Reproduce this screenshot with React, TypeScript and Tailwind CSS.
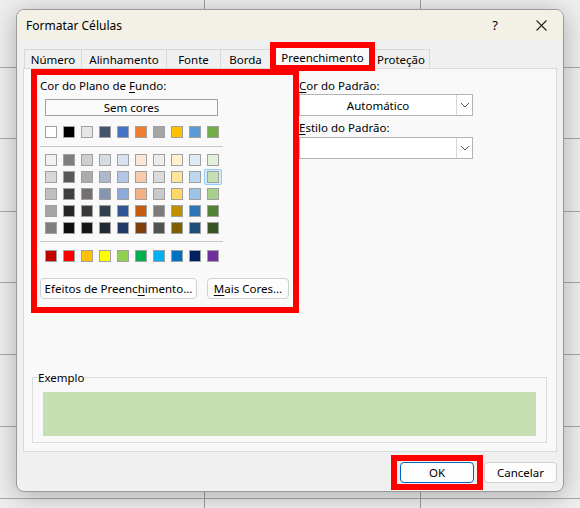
import React from 'react';

const themeRow = ['#FFFFFF', '#000000', '#E7E6E6', '#44546A', '#4472C4', '#ED7D31', '#A5A5A5', '#FFC000', '#5B9BD5', '#70AD47'];

const tintRows = [
  ['#F2F2F2', '#7F7F7F', '#D0CECE', '#D6DCE4', '#D9E2F3', '#FBE5D5', '#EDEDED', '#FFF2CC', '#DEEBF6', '#E2EFD9'],
  ['#D8D8D8', '#595959', '#AEABAB', '#ADB9CA', '#B4C6E7', '#F7CBAC', '#DBDBDB', '#FEE599', '#BDD7EE', '#C5E0B3'],
  ['#BFBFBF', '#3F3F3F', '#757070', '#8496B0', '#8EAADB', '#F4B183', '#C9C9C9', '#FFD965', '#9CC3E5', '#A8D08D'],
  ['#A5A5A5', '#262626', '#3A3838', '#323F4F', '#2F5496', '#C55A11', '#7B7B7B', '#BF9000', '#2E75B5', '#538135'],
  ['#7F7F7F', '#0C0C0C', '#171616', '#222A35', '#1F3864', '#833C0B', '#525252', '#7F6000', '#1E4E79', '#375623'],
];

const standardRow = ['#C00000', '#FF0000', '#FFC000', '#FFFF00', '#92D050', '#00B050', '#00B0F0', '#0070C0', '#002060', '#7030A0'];

// Selected swatch: second tint row, last column
const SELECTED = { row: 1, col: 9 };

const Swatch: React.FC<{ color: string; selected?: boolean }> = ({ color, selected }) => (
  <div className="relative w-[12px] h-[12px]">
    {selected && (
      <div className="absolute -left-[3px] -right-[3px] -top-[2px] -bottom-[2px] rounded-[2px] border border-[#8fcbf7] bg-[#d6ecfc]" />
    )}
    <div className="relative w-[12px] h-[12px] border border-[#a0a0a0]" style={{ backgroundColor: color }} />
  </div>
);

const SwatchRow: React.FC<{ colors: string[]; selectedCol?: number }> = ({ colors, selectedCol }) => (
  <div className="flex gap-[6px]">
    {colors.map((c, i) => (
      <Swatch key={i} color={c} selected={i === selectedCol} />
    ))}
  </div>
);

const Chevron = () => (
  <svg width="10" height="6" viewBox="0 0 10 6" fill="none">
    <path d="M1 1l4 4 4-4" stroke="#555" strokeWidth="1" />
  </svg>
);

const Dropdown: React.FC<{ value?: string }> = ({ value }) => (
  <div className="flex h-[22px] w-[174px] border border-[#b4b4b4] bg-white">
    <div className="flex-1 flex items-center justify-center">{value}</div>
    <div className="w-[16px] flex items-center justify-center border-l border-[#d6d6d6]">
      <Chevron />
    </div>
  </div>
);

const tabs = [
  { label: 'Número', w: 'w-[57px]' },
  { label: 'Alinhamento', w: 'w-[85px]' },
  { label: 'Fonte', w: 'w-[54px]' },
  { label: 'Borda', w: 'w-[50px]' },
];

export default function App() {
  return (
    <div className="relative w-[580px] h-[508px] overflow-hidden bg-[#eeeeee] text-[11.5px] leading-[15px] text-black font-['Segoe_UI','Noto_Sans',sans-serif]">
      {/* spreadsheet grid behind the dialog */}
      <div className="absolute left-[204px] top-0 h-full w-px bg-[#9c9c9c]" />
      <div className="absolute left-[420px] top-0 h-full w-px bg-[#9c9c9c]" />
      {[67, 138, 211, 282, 354, 426, 498].map((y) => (
        <div key={y} className="absolute left-0 w-full h-px bg-[#a8a8a8]" style={{ top: y }} />
      ))}

      <div className="relative pt-[9px] pl-[16px]">
        <div className="w-[548px] h-[483px] flex flex-col rounded-[8px] border border-[#9a9a9a] bg-[#f0f0f0] overflow-hidden shadow-[0_4px_24px_rgba(0,0,0,0.28)]">
          {/* title bar */}
          <div className="h-[30px] flex items-center bg-[#f3f1e6] pl-[9px] pr-[16px]">
            <span className="text-[12px]">Formatar Células</span>
            <span className="ml-auto mr-[38px] text-[13px]">?</span>
            <svg width="11" height="11" viewBox="0 0 11 11">
              <path d="M0.5 0.5l10 10M10.5 0.5l-10 10" stroke="#222" strokeWidth="1.1" />
            </svg>
          </div>

          <div className="flex-1 flex flex-col px-[6px]">
            {/* tab strip */}
            <div className="h-[28px] flex items-end pl-[1px]">
              {tabs.map((t) => (
                <div
                  key={t.label}
                  className={`${t.w} h-[19px] flex items-center justify-center border-t border-l border-[#d9d9d9] bg-[#f0f0f0]`}
                >
                  {t.label}
                </div>
              ))}
              <div className="relative z-10 -mb-[3px] w-[105px] h-[29px] border-[6px] border-[#ff0000] bg-[#f9f9f9] flex justify-center pt-[2px]">
                Preenchimento
              </div>
              <div className="w-[55px] h-[19px] flex items-center pl-[2px] border-t border-r border-[#d9d9d9] bg-[#f0f0f0]">
                Proteção
              </div>
            </div>

            {/* tab panel */}
            <div className="h-[384px] flex flex-col border border-[#dadada] bg-[#f9f9f9]">
              <div className="flex pl-[7px]">
                {/* background colour group, highlighted */}
                <div className="w-[268px] h-[244px] border-[6px] border-[#ff0000] flex flex-col">
                  <div className="pt-[3px] pl-[3px]">
                    Cor do Plano de <span className="underline underline-offset-2">F</span>undo:
                  </div>
                  <div className="mt-[6px] ml-[8px] w-[173px] h-[17px] flex items-center justify-center border border-[#a0a0a0] bg-[#fbfbfb]">
                    Sem cores
                  </div>
                  <div className="mt-[10px] ml-[8px]">
                    <SwatchRow colors={themeRow} />
                  </div>
                  <div className="mt-[8px] ml-[3px] w-[183px] h-px bg-[#c8c8c8]" />
                  <div className="mt-[7px] ml-[8px] flex flex-col gap-[5px]">
                    {tintRows.map((row, r) => (
                      <SwatchRow key={r} colors={row} selectedCol={r === SELECTED.row ? SELECTED.col : undefined} />
                    ))}
                  </div>
                  <div className="mt-[7px] ml-[3px] w-[183px] h-px bg-[#c8c8c8]" />
                  <div className="mt-[8px] ml-[8px]">
                    <SwatchRow colors={standardRow} />
                  </div>
                  <div className="mt-[16px] ml-[3px] flex gap-[10px]">
                    <div className="w-[157px] h-[21px] flex items-center justify-center rounded-[4px] border border-[#d0d0d0] bg-[#fdfdfd]">
                      Efeitos de Preenc<span className="underline underline-offset-2">h</span>imento...
                    </div>
                    <div className="w-[82px] h-[21px] flex items-center justify-center rounded-[4px] border border-[#d0d0d0] bg-[#fdfdfd]">
                      <span className="underline underline-offset-2">M</span>ais Cores...
                    </div>
                  </div>
                </div>

                {/* pattern controls */}
                <div className="pt-[9px] flex flex-col">
                  <div>
                    <span className="underline underline-offset-2">C</span>or do Padrão:
                  </div>
                  <div className="mt-[1px]">
                    <Dropdown value="Automático" />
                  </div>
                  <div className="mt-[4px]">
                    <span className="underline underline-offset-2">E</span>stilo do Padrão:
                  </div>
                  <div className="mt-[2px]">
                    <Dropdown />
                  </div>
                </div>
              </div>

              <fieldset className="mt-auto mb-[8px] ml-[8px] mr-[9px] border border-[#dcdcdc] px-[10px] pb-[6px]">
                <legend className="ml-[-5px] px-0">Exemplo</legend>
                <div className="mt-[7px] h-[44px] bg-[#c6e0b4]" />
              </fieldset>
            </div>

            {/* dialog buttons */}
            <div className="mt-[3px] flex justify-end">
              <div className="border-[6px] border-[#ff0000] px-[3px] py-[1px]">
                <div className="w-[74px] h-[21px] flex items-center justify-center rounded-[4px] border border-[#0067c0] bg-[#fdfdfd]">
                  OK
                </div>
              </div>
              <div className="mt-[7px] ml-[1px] w-[73px] h-[21px] flex items-center justify-center rounded-[4px] border border-[#cfcfcf] bg-[#fdfdfd]">
                Cancelar
              </div>
            </div>
          </div>
        </div>
      </div>
    </div>
  );
}
